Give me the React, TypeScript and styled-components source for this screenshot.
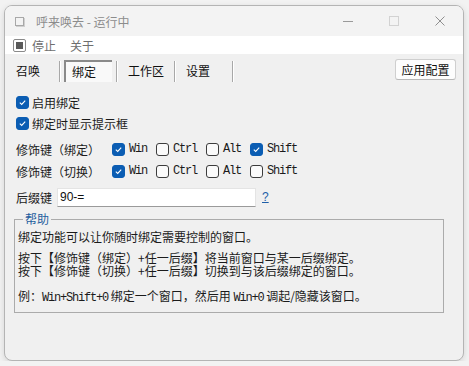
import React from 'react';

import styled, {createGlobalStyle} from 'styled-components';

const GlobalStyle = createGlobalStyle`
  html, body {
    margin: 0;
    padding: 0;
    background: #f2f2f2;
  }
  body {
    font-family: "Noto Sans CJK SC", "Noto Sans", sans-serif;
    font-size: 12px;
    color: #1b1b1b;
  }
`;

const Window = styled.div`
  width: 458px;
  height: 354px;
  margin: 5px 0 0 4px;
  border: 1px solid #b4b4b4;
  border-radius: 8px;
  background: #f0f0f0;
  box-shadow: 0 2px 6px rgba(0, 0, 0, 0.12);
  overflow: hidden;
  display: flex;
  flex-direction: column;
`;

const TitleBar = styled.div`
  height: 30px;
  display: flex;
  align-items: center;
  background: #f3f3f3;
  padding-left: 10px;
`;

const AppIcon = styled.span`
  width: 7px;
  height: 7px;
  border: 1px solid #a8a8a8;
  box-shadow: 1px 1px 0 #d0d0d0;
  margin-right: 12px;
`;

const TitleText = styled.span`
  color: #8c8c8c;
  flex: 1;
`;

const CaptionButton = styled.div`
  width: 46px;
  height: 30px;
  display: flex;
  align-items: center;
  justify-content: center;
`;

const MenuBar = styled.div`
  height: 18px;
  display: flex;
  align-items: center;
  background: #ffffff;
  padding-left: 8px;
  color: #6e6e6e;
`;

const MenuItem = styled.span`
  display: flex;
  align-items: center;
  gap: 6px;
  margin-right: 14px;
`;

const StopIcon = styled.span`
  width: 11px;
  height: 11px;
  border: 1px solid #8a8a8a;
  border-radius: 2px;
  display: flex;
  align-items: center;
  justify-content: center;
  &::after {
    content: '';
    width: 7px;
    height: 7px;
    background: #5a5a5a;
  }
`;

const TabRow = styled.div`
  height: 30px;
  display: flex;
  align-items: flex-start;
  padding-top: 5px;
  padding-right: 7px;
  box-sizing: border-box;
`;

const Tab = styled.div<{$width: number}>`
  width: ${p => p.$width}px;
  height: 21px;
  margin-top: 2px;
  padding: 0 4px;
  box-sizing: border-box;
  border-right: 1px solid #a8a8a8;
  box-shadow: 1px 0 0 #ffffff;
  display: flex;
`;

const TabFace = styled.div<{$active?: boolean}>`
  flex: 1;
  padding-left: ${p => (p.$active ? 6 : 7)}px;
  line-height: 20px;
  color: #111;
  ${p =>
    p.$active &&
    `
    margin-top: -1px;
    border-top: 2px solid #8a8a8a;
    border-left: 2px solid #8a8a8a;
    background: #f9f9f9;
  `}
`;

const Spacer = styled.div`
  flex: 1;
`;

const ApplyButton = styled.button`
  height: 21px;
  width: 61px;
  padding: 0;
  border: 1px solid #cfcfcf;
  border-bottom-color: #b8b8b8;
  border-radius: 3px;
  background: #fdfdfd;
  font-family: "Noto Sans CJK SC", sans-serif;
  font-size: 12px;
  color: #111;
`;

const Content = styled.div`
  padding: 8px 0 0 11px;
  display: flex;
  flex-direction: column;
`;

const Row = styled.div<{$height?: number; $top?: number}>`
  height: ${p => p.$height ?? 21}px;
  margin-top: ${p => p.$top ?? 0}px;
  display: flex;
  align-items: center;
`;

const Box = styled.span<{$checked?: boolean}>`
  width: 13px;
  height: 13px;
  box-sizing: border-box;
  border-radius: 3px;
  border: 1px solid ${p => (p.$checked ? '#0b5db3' : '#3c3c3c')};
  background: ${p => (p.$checked ? '#0b5db3' : '#fafafa')};
  display: inline-flex;
  align-items: center;
  justify-content: center;
  flex-shrink: 0;
`;

const CheckLabel = styled.span`
  margin-left: 3px;
`;

const RowLabel = styled.span`
  width: 96px;
`;

const ModOption = styled.span`
  display: inline-flex;
  align-items: center;
  margin-right: 9px;
`;

const Mono = styled.span`
  font-family: "Liberation Mono", "DejaVu Sans Mono", monospace;
  font-size: 12px;
  letter-spacing: -1.2px;
`;

const ModText = styled(Mono)`
  margin-left: 4px;
`;

const SuffixInput = styled.input`
  width: 199px;
  height: 19px;
  box-sizing: border-box;
  margin-left: 5px;
  padding: 0 2px;
  border: 1px solid #e4e4e4;
  border-bottom-color: #9a9a9a;
  background: #ffffff;
  font-family: "Liberation Sans", sans-serif;
  font-size: 12px;
  color: #111;
  outline: none;
`;

const HelpLink = styled.a`
  margin-left: 6px;
  color: #1e5fa8;
  text-decoration: underline;
  font-family: "Liberation Sans", sans-serif;
`;

const GroupBox = styled.fieldset`
  width: 430px;
  box-sizing: border-box;
  margin: 4px 0 0 -2px;
  padding: 0 3px 5px;
  border: 1px solid #ababab;
`;

const GroupTitle = styled.legend`
  margin-left: 5px;
  padding: 0 2px;
  line-height: 16px;
  color: #1f5e9e;
`;

const HelpText = styled.div<{$top?: number; $lh?: number}>`
  margin-top: ${p => p.$top ?? 0}px;
  line-height: ${p => p.$lh ?? 17}px;
  white-space: nowrap;
`;

function Check({checked}: {checked?: boolean}) {
  return (
    <Box $checked={checked}>
      {checked && (
        <svg width="9" height="9" viewBox="0 0 9 9">
          <path d="M1.8 4.6 L3.7 6.4 L7.2 2.6" fill="none" stroke="#fff" strokeWidth="1.1" />
        </svg>
      )}
    </Box>
  );
}

function ModRow({label, mods}: {label: string; mods: boolean[]}) {
  const names = ['Win', 'Ctrl', 'Alt', 'Shift'];
  return (
    <Row $height={22}>
      <RowLabel>{label}</RowLabel>
      {names.map((n, i) => (
        <ModOption key={n}>
          <Check checked={mods[i]} />
          <ModText>{n}</ModText>
        </ModOption>
      ))}
    </Row>
  );
}

function App() {
  return (
    <>
      <GlobalStyle />
      <Window>
        <TitleBar>
          <AppIcon />
          <TitleText>呼来唤去 - 运行中</TitleText>
          <CaptionButton>
            <svg width="10" height="10" viewBox="0 0 10 10">
              <path d="M0 5.5 H10" stroke="#9a9a9a" strokeWidth="1" />
            </svg>
          </CaptionButton>
          <CaptionButton>
            <svg width="10" height="10" viewBox="0 0 10 10">
              <rect x="0.5" y="0.5" width="9" height="9" fill="none" stroke="#d2d2d2" />
            </svg>
          </CaptionButton>
          <CaptionButton>
            <svg width="10" height="10" viewBox="0 0 10 10">
              <path d="M0.5 0.5 L9.5 9.5 M9.5 0.5 L0.5 9.5" stroke="#8f8f8f" strokeWidth="1" />
            </svg>
          </CaptionButton>
        </TitleBar>

        <MenuBar>
          <MenuItem>
            <StopIcon />
            停止
          </MenuItem>
          <MenuItem>关于</MenuItem>
        </MenuBar>

        <TabRow>
          <Tab $width={55}>
            <TabFace>召唤</TabFace>
          </Tab>
          <Tab $width={57}>
            <TabFace $active>绑定</TabFace>
          </Tab>
          <Tab $width={58}>
            <TabFace>工作区</TabFace>
          </Tab>
          <Tab $width={58}>
            <TabFace>设置</TabFace>
          </Tab>
          <Spacer />
          <ApplyButton>应用配置</ApplyButton>
        </TabRow>

        <Content>
          <Row>
            <Check checked />
            <CheckLabel>启用绑定</CheckLabel>
          </Row>
          <Row>
            <Check checked />
            <CheckLabel>绑定时显示提示框</CheckLabel>
          </Row>
          <Row $height={0} $top={4} />
          <ModRow label="修饰键（绑定）" mods={[true, false, false, true]} />
          <ModRow label="修饰键（切换）" mods={[true, false, false, false]} />
          <Row $height={20} $top={5}>
            <span>后缀键</span>
            <SuffixInput defaultValue="90-=" />
            <HelpLink>?</HelpLink>
          </Row>

          <GroupBox>
            <GroupTitle>帮助</GroupTitle>
            <HelpText $top={1}>绑定功能可以让你随时绑定需要控制的窗口。</HelpText>
            <HelpText $top={6} $lh={13}>
              按下【修饰键（绑定）+任一后缀】将当前窗口与某一后缀绑定。
              <br />
              按下【修饰键（切换）+任一后缀】切换到与该后缀绑定的窗口。
            </HelpText>
            <HelpText $top={10}>
              例：<Mono>Win+Shift+0</Mono> 绑定一个窗口，然后用 <Mono>Win+0</Mono> 调起/隐藏该窗口。
            </HelpText>
          </GroupBox>
        </Content>
      </Window>
    </>
  );
}

export default App;
